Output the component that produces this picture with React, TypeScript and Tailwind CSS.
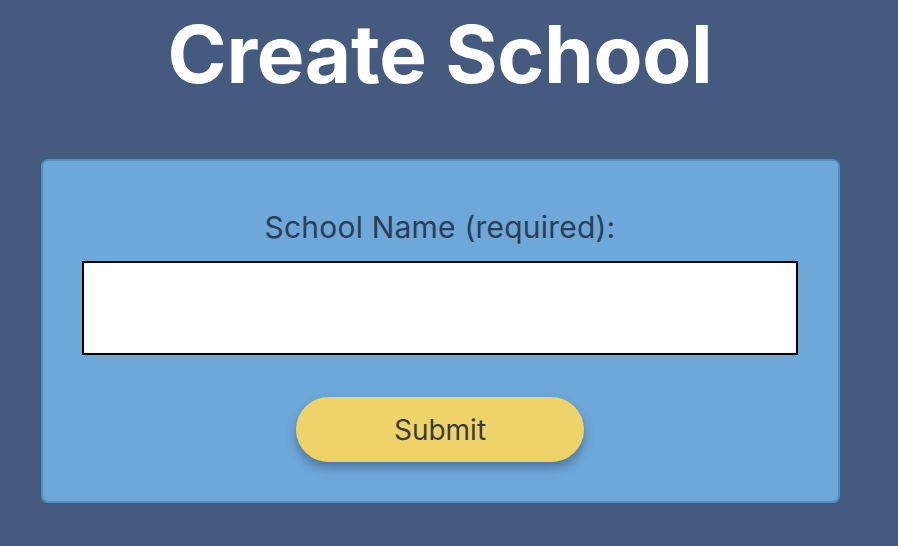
export default function App() {
  return (
    <div className="min-h-screen w-full bg-[#455a7f] font-['Inter',sans-serif]">
      <div className="w-[880px] flex flex-col items-center">
        <h1 className="mt-[12px] text-[80px] leading-[84px] font-bold text-white tracking-[-0.3px]">
          Create School
        </h1>
        <div className="mt-[63px] w-[799px] h-[344px] rounded-[7px] border-2 border-[#4f8fc0] bg-[#6da8d9] flex flex-col items-center">
          <label className="mt-[48px] text-[30px] leading-[36px] tracking-[0.2px] text-[#2c3d56]">
            School Name (required):
          </label>
          <input
            type="text"
            className="mt-[16px] w-[716px] h-[94px] border-2 border-black bg-white outline-none"
          />
          <button className="mt-[42px] w-[288px] h-[65px] rounded-full bg-[#eed468] text-[28px] text-[#3a3c40] shadow-[0_6px_10px_rgba(40,60,90,0.45)]">
            Submit
          </button>
        </div>
      </div>
    </div>
  );
}
